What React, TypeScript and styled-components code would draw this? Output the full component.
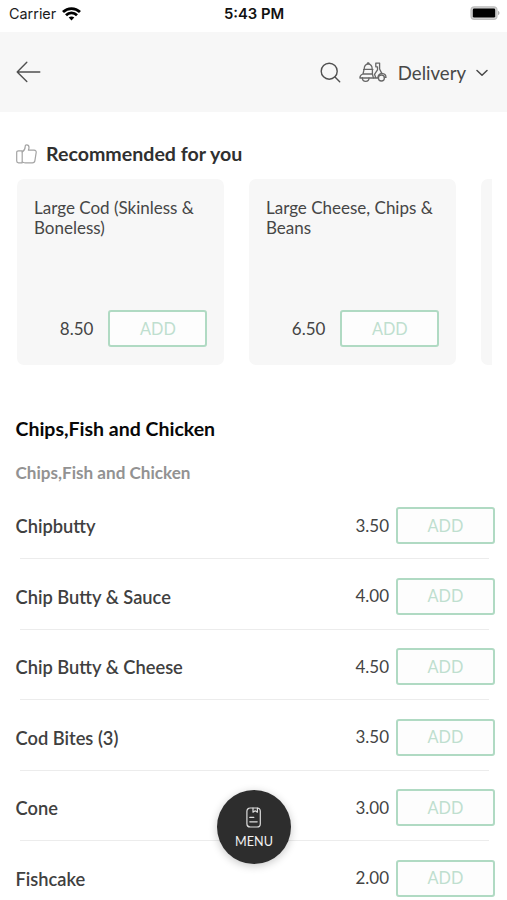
import React from 'react';
import styled, { createGlobalStyle } from 'styled-components';

const GlobalStyle = createGlobalStyle`
  * { box-sizing: border-box; }
  body { margin: 0; background: #fff; font-family: Lato, sans-serif; color: #3c3c3c; }
`;

const Screen = styled.main`
  position: relative;
  height: 900px;
  overflow: hidden;
  background: #fff;
`;

const StatusBar = styled.div`
  display: grid;
  grid-template-columns: 1fr auto 1fr;
  align-items: center;
  height: 32px;
  padding: 0 7px 5px 9px;
  font: 400 14.4px/20px Inter, sans-serif;
  color: #1c1c1c;
`;

const Carrier = styled.div`
  display: flex;
  align-items: center;
  gap: 6px;
`;

const Clock = styled.div`
  margin-left: -1px;
  font-weight: 600;
  font-size: 14.8px;
  color: #111;
`;

const Battery = styled.div`
  display: flex;
  justify-content: flex-end;
  padding-bottom: 1px;
`;

const Header = styled.header`
  display: flex;
  align-items: center;
  justify-content: space-between;
  height: 80px;
  padding: 0 19px 0 16px;
  background: #f7f7f7;
`;

const HeaderActions = styled.div`
  display: flex;
  align-items: center;
`;

const IconButton = styled.button`
  display: flex;
  padding: 0;
  border: 0;
  background: none;
`;

const DeliverySelect = styled.button`
  display: flex;
  align-items: center;
  margin-left: 18px;
  padding: 0;
  border: 0;
  background: none;
  font: 400 18.6px/24px Lato, sans-serif;
  color: #484848;
`;

const DeliveryLabel = styled.span`
  margin: 1px 10px 0 11px;
`;

const Recommended = styled.section`
  padding: 30px 15px 0 16px;
`;

const SectionTitle = styled.h2`
  display: flex;
  align-items: center;
  gap: 9px;
  height: 24px;
  margin: 0 0 13px;
  font-size: 19.6px;
  font-weight: 700;
  line-height: 24px;
  color: #303030;
`;

const CardStrip = styled.div`
  display: flex;
  gap: 24.6px;
  padding-left: 1px;
  overflow: hidden;
`;

const Card = styled.article`
  display: flex;
  flex: 0 0 207.4px;
  flex-direction: column;
  justify-content: space-between;
  height: 186px;
  padding: 19px 17px 18px;
  border-radius: 7px;
  background: #f7f7f7;
`;

const CardName = styled.h3`
  margin: 0;
  font-size: 17px;
  font-weight: 400;
  line-height: 20px;
  color: #464646;
`;

const Purchase = styled.div<{ $gap: number }>`
  display: flex;
  align-items: center;
  justify-content: flex-end;
  gap: ${({ $gap }) => $gap}px;
`;

const Price = styled.span`
  font-size: 17px;
  line-height: 24px;
  color: #444;
`;

const AddButton = styled.button`
  width: 99px;
  height: 37px;
  padding: 0;
  border: 2px solid #b0dac3;
  border-radius: 3px;
  background: #fdfdfd;
  font: 400 16.3px/24px Lato, sans-serif;
  color: #bfdfcf;
`;

const MenuSection = styled.section`
  padding: 51px 12px 0 15.5px;
`;

const Category = styled.h2`
  margin: 0;
  font-size: 19.5px;
  font-weight: 700;
  line-height: 26px;
  color: #080808;
`;

const Subcategory = styled.h3`
  margin: 19px 0 0;
  font-size: 17.1px;
  font-weight: 700;
  line-height: 24px;
  color: #929292;
`;

const MenuList = styled.ul`
  margin: 5px 0 0;
  padding: 0;
  list-style: none;
`;

const MenuRow = styled.li`
  display: grid;
  grid-template-columns: 1fr auto;
  align-content: start;
  height: 70.5px;
  padding-top: 17px;
`;

const ItemName = styled.span`
  padding-top: 1px;
  font-size: 18.3px;
  font-weight: 600;
  line-height: 36px;
  color: #404040;
`;

const Divider = styled.div`
  grid-column: 1 / -1;
  height: 1px;
  margin: 14px 6px 0 4px;
  background: #ececec;
`;

const MenuFab = styled.button`
  position: absolute;
  top: 790px;
  left: 217px;
  display: flex;
  flex-direction: column;
  align-items: center;
  width: 74px;
  height: 74px;
  padding: 17px 0 0;
  border: 0;
  border-radius: 50%;
  background: #2d2d2d;
  box-shadow: 0 2px 8px rgba(0, 0, 0, 0.22);
  font: 400 12.6px/16px Lato, sans-serif;
  color: #f2f2f2;
`;

const FabLabel = styled.span`
  margin-top: 6px;
`;

const WifiIcon = () => (
  <svg width="19" height="14" viewBox="0 0 19 14" fill="none" stroke="#000" strokeWidth="2.8">
    <path d="M1 5.1C5.8.4 13.2.4 18 5.1" />
    <path d="M4 8.2c3.1-3 7.9-3 11 0" />
    <path d="M9.5 13.4 6.7 10.6c1.6-1.5 4-1.5 5.6 0Z" fill="#000" stroke="none" />
  </svg>
);

const BatteryIcon = () => (
  <svg width="30" height="14" viewBox="0 0 30 14">
    <rect x="1" y=".8" width="26" height="12.6" rx="3.4" fill="#d4d4d4" stroke="#bdbdbd" strokeWidth="1.2" />
    <rect x="2.8" y="2.6" width="22.4" height="9" rx="1.4" fill="#000" />
    <path d="M28.2 4.8v4.4c1.7-.7 1.7-3.7 0-4.4Z" fill="#999" />
  </svg>
);

const BackIcon = () => (
  <svg width="25" height="22" viewBox="0 0 25 22" fill="none" stroke="#505050" strokeWidth="1.4" strokeLinecap="round" strokeLinejoin="round">
    <path d="M10.8 1.2 1.2 11l9.6 9.6M1.2 11h22.6" />
  </svg>
);

const SearchIcon = () => (
  <svg width="21" height="21" viewBox="0 0 21 21" fill="none" stroke="#505050" strokeWidth="1.4" strokeLinecap="round">
    <circle cx="9.2" cy="9.2" r="8" />
    <path d="m15 15 4.7 4.7" />
  </svg>
);

const ScooterIcon = () => (
  <svg width="28" height="20" viewBox="0 0 28 20" fill="none" stroke="#686868" strokeWidth="1.3" strokeLinecap="round" strokeLinejoin="round">
    <path d="M5.2 7.4C5.2 4 6.6 2.2 9.2 2.2s4 1.8 4 5.2M8.2 2.1 8.6.9h1.2l.4 1.2M4.6 7.4h9.2" />
    <path d="M5 7.6 4 12M13.4 7.6V12M3.8 12h9.6l1 3.8M3.8 12C1.7 12.7.9 14 .9 16h2.5" />
    <path d="M3.4 16a3.3 3.3 0 0 0 6.6 0" />
    <path d="M3.4 16h15.4c.3-2.7 1.8-4.3 4-4.6L20.6 7V1.1h-3.8v3.7h1.7v3l-3 4.5 1.3 3.5" />
    <path d="M22.8 11.4c2.6.2 4.2 1.9 4.2 4h-1.6" />
    <circle cx="22.4" cy="16" r="3" />
  </svg>
);

const ChevronIcon = () => (
  <svg width="12" height="9" viewBox="0 0 12 9" fill="none" stroke="#484848" strokeWidth="1.5" strokeLinecap="round" strokeLinejoin="round">
    <path d="m1 2.5 5 4.8 5-4.8" />
  </svg>
);

const ThumbIcon = () => (
  <svg width="21" height="20" viewBox="0 0 21 20" fill="none" stroke="#a4a4a4" strokeWidth="1.2" strokeLinecap="round" strokeLinejoin="round">
    <path d="M6.2 6.8H2.5C1.3 6.8.7 7.4.7 8.5v8.6c0 1.1.6 1.7 1.8 1.7h3.7V6.8Z" />
    <path d="M6.2 7.9c2.4-1.2 2.9-3 3-5.3 0-1.2.6-1.8 1.4-1.8 1.8 0 2.4 1.3 2.4 2.7 0 1-.3 1.9-.6 2.7h5.7c1.5 0 2.3.9 2.1 2.2l-1.3 8.2c-.2 1.4-1.1 2.2-2.5 2.2H9.5c-1.3 0-2.1-.4-3.3-.8" />
  </svg>
);

const MenuIcon = () => (
  <svg width="16" height="21" viewBox="0 0 16 21" fill="none" stroke="#ddd" strokeWidth="1.2" strokeLinecap="round" strokeLinejoin="round">
    <rect x=".9" y="1" width="13.4" height="19" rx="3.3" />
    <path d="M7 1v4.2l2.2-1.4 2.2 1.4V1M3.8 10.4h4M3.8 14.8h7.4" />
  </svg>
);

const recommendedItems = [
  { name: 'Large Cod (Skinless & Boneless)', price: '8.50' },
  { name: 'Large Cheese, Chips & Beans', price: '6.50' },
];

const menuItems = [
  { name: 'Chipbutty', price: '3.50' },
  { name: 'Chip Butty & Sauce', price: '4.00' },
  { name: 'Chip Butty & Cheese', price: '4.50' },
  { name: 'Cod Bites (3)', price: '3.50' },
  { name: 'Cone', price: '3.00' },
  { name: 'Fishcake', price: '2.00' },
];

const PurchaseControls = ({ price, gap }: { price: string; gap: number }) => (
  <Purchase $gap={gap}>
    <Price>{price}</Price>
    <AddButton>ADD</AddButton>
  </Purchase>
);

export default function App() {
  return (
    <>
      <GlobalStyle />
      <Screen>
        <StatusBar>
          <Carrier>Carrier <WifiIcon /></Carrier>
          <Clock>5:43 PM</Clock>
          <Battery><BatteryIcon /></Battery>
        </StatusBar>
        <Header>
          <IconButton aria-label="Back"><BackIcon /></IconButton>
          <HeaderActions>
            <IconButton aria-label="Search"><SearchIcon /></IconButton>
            <DeliverySelect>
              <ScooterIcon />
              <DeliveryLabel>Delivery</DeliveryLabel>
              <ChevronIcon />
            </DeliverySelect>
          </HeaderActions>
        </Header>
        <Recommended>
          <SectionTitle><ThumbIcon />Recommended for you</SectionTitle>
          <CardStrip>
            {recommendedItems.map((item) => (
              <Card key={item.name}>
                <CardName>{item.name}</CardName>
                <PurchaseControls price={item.price} gap={15} />
              </Card>
            ))}
            <Card />
          </CardStrip>
        </Recommended>
        <MenuSection>
          <Category>Chips,Fish and Chicken</Category>
          <Subcategory>Chips,Fish and Chicken</Subcategory>
          <MenuList>
            {menuItems.map((item) => (
              <MenuRow key={item.name}>
                <ItemName>{item.name}</ItemName>
                <PurchaseControls price={item.price} gap={7} />
                <Divider />
              </MenuRow>
            ))}
          </MenuList>
        </MenuSection>
        <MenuFab>
          <MenuIcon />
          <FabLabel>MENU</FabLabel>
        </MenuFab>
      </Screen>
    </>
  );
}
